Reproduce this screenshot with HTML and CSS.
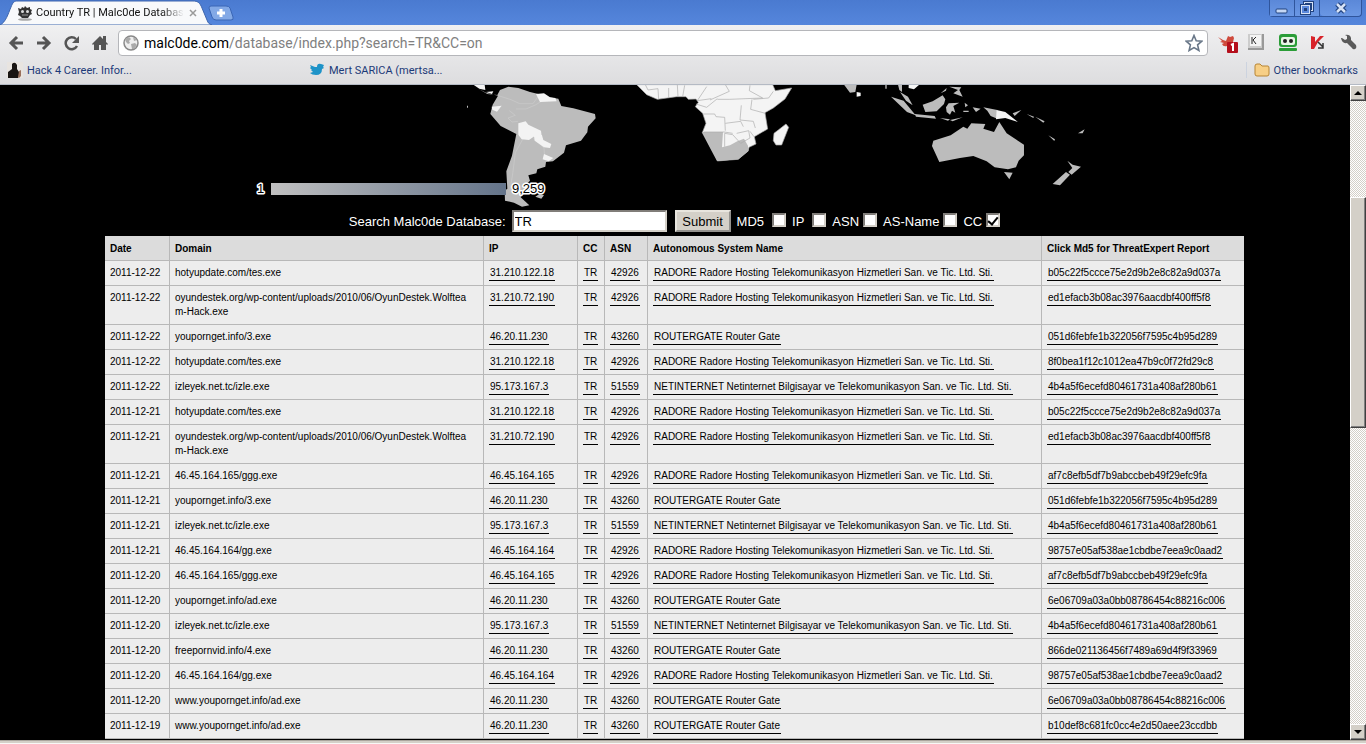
FILE: index.html
```html
<!DOCTYPE html>
<html lang="en">
<head>
<meta charset="utf-8">
<title>Country TR | Malc0de Database</title>
<link rel="stylesheet" href="styles.css">
</head>
<body>
<header class="chrome">
  <div class="tabstrip">
    <div class="tab">
      <svg class="tab-shape" viewBox="0 0 212 25" preserveAspectRatio="none" aria-hidden="true"><path d="M0 25C6 22 8 14 11 7C13 2 14 1 18 1H193C198 1 200 3 202 8L207 20C208 23 209 24 212 25Z" fill="#f8f9fb" stroke="#3d65ad" stroke-width="1"/></svg>
      <svg class="icon16" viewBox="0 0 16 16" aria-hidden="true"><ellipse cx="8" cy="14.5" rx="7" ry="1.3" fill="#aaa"/><path d="M1 3l3 1 1-2 2 1 1-2 2 2 3-1v2l2 1-1 2 1 2-2 1-2 3H5l-2-2-2-1 1-3z" fill="#333"/><circle cx="5.500" cy="6.500" r="1.500" fill="#ddd"/><circle cx="10.500" cy="6.500" r="1.500" fill="#ddd"/><path d="M5 10h6" stroke="#999"/></svg>
      <span class="tab-title">Country TR | Malc0de Databas</span>
      <button class="plain tab-close" aria-label="Close tab"><svg viewBox="0 0 8 8" width="8" height="8"><path d="M1 1l6 6M7 1L1 7" stroke="#9a9a9a" stroke-width="1.5"/></svg></button>
    </div>
    <button class="plain" aria-label="New tab"><svg width="26" height="16" viewBox="0 0 26 16"><path d="M1 3Q1 1 3 1H18Q21 1 22 3L25 12Q26 15 23 15H8Q5 15 4 12Z" fill="#83a9e6" stroke="#3a66b5"/><path d="M13 4v8M9 8h8" stroke="#fff" stroke-width="3"/></svg></button>
    <div class="window-buttons">
      <button aria-label="Minimize"><svg width="14" height="14" viewBox="0 0 14 14"><rect x="1" y="8" width="11" height="4" rx="1" fill="#c5d7f4" stroke="#20427f"/></svg></button>
      <button aria-label="Restore"><svg width="14" height="14" viewBox="0 0 14 14"><rect x="4.500" y="1.500" width="8" height="8" fill="none" stroke="#20427f" stroke-width="3"/><rect x="4.500" y="1.500" width="8" height="8" fill="none" stroke="#d6e2f6"/><rect x="1.500" y="4.500" width="8" height="8" fill="#5b89dc" stroke="#20427f" stroke-width="3"/><rect x="1.500" y="4.500" width="8" height="8" fill="#5b89dc" stroke="#d6e2f6"/><rect x="4" y="7" width="3" height="3" fill="#20427f"/></svg></button>
      <button class="win-close" aria-label="Close"><svg width="14" height="14" viewBox="0 0 14 14"><path d="M3 3l8 8M11 3l-8 8" stroke="#20427f" stroke-width="5"/><path d="M3 3l8 8M11 3l-8 8" stroke="#d6e2f6" stroke-width="2.500"/></svg></button>
    </div>
  </div>
  <div class="toolbar">
    <nav class="nav-buttons">
      <button class="plain" aria-label="Back"><svg class="icon16" viewBox="0 0 16 16"><path d="M9 2L3 8l6 6M3 8h12" fill="none" stroke="#555" stroke-width="3"/></svg></button>
      <button class="plain" aria-label="Forward"><svg class="icon16" viewBox="0 0 16 16"><path d="M7 2l6 6-6 6M13 8H1" fill="none" stroke="#555" stroke-width="3"/></svg></button>
      <button class="plain" aria-label="Reload"><svg class="icon16" viewBox="0 0 16 16"><path d="M13 11A6 6 0 1 1 12 4" fill="none" stroke="#555" stroke-width="2.500"/><path d="M15 1v7H8z" fill="#555"/></svg></button>
      <button class="plain" aria-label="Home"><svg class="icon16" viewBox="0 0 16 16"><path d="M0 9L8 1l3 3V1h3v6l2 2-1 1-1-1v6H9v-5H7v5H2V9l-1 1z" fill="#555"/></svg></button>
    </nav>
    <div class="omnibox">
      <svg class="icon16" viewBox="0 0 16 16" aria-hidden="true"><circle cx="8" cy="8" r="7" fill="#eee" stroke="#888" stroke-width="1.500"/><path d="M2 4l4-2 2 2-2 2 1 2-2 1-2-2zM8 9l4-1 2 2-3 4-2 0zM10 2l4 3-3 1z" fill="#aaa"/></svg>
      <span class="url"><span class="host">malc0de.com</span>/database/index.php?search=TR&amp;CC=on</span>
      <button class="plain" aria-label="Bookmark this page"><svg width="18" height="18" viewBox="0 0 18 18"><path d="M9 1.500l2.200 5.200 5.600.5-4.200 3.700 1.300 5.600L9 13.600l-4.900 2.900 1.300-5.600-4.200-3.700 5.600-.5z" fill="#fff" stroke="#697788" stroke-width="1.600"/></svg></button>
    </div>
    <div class="extensions">
      <button class="plain" aria-label="Notifications"><svg width="22" height="20" viewBox="0 0 22 20"><path d="M0 4l5 3 3 1 2-5 2 1 3-1 1 2-1 4q-2 4-6 4-4 1-5-2l2-1-4-1 2-1z" fill="#cf4a3c"/><rect x="9" y="9" width="11" height="11" rx="1" fill="#b50f1c"/><path d="M13 12l2-1v7" fill="none" stroke="#fff" stroke-width="2"/></svg></button>
      <button class="plain" aria-label="Keyboard"><svg width="20" height="20" viewBox="0 0 20 20"><rect x="0" y="1" width="16" height="16" fill="#999"/><rect x="0" y="1" width="14" height="14" fill="#ccc"/><rect x="2" y="2" width="11" height="11" fill="#f4f4f4"/><path d="M4 4v7M8 4L5 7l3 4" fill="none" stroke="#222"/></svg></button>
      <button class="plain" aria-label="RoboForm"><svg width="20" height="20" viewBox="0 0 20 20"><rect x="1" y="1" width="18" height="13" rx="3" fill="#2b9d38"/><rect x="3" y="4" width="14" height="8" rx="2" fill="#e8f6e6"/><circle cx="7" cy="8" r="2" fill="#222"/><circle cx="13" cy="8" r="2" fill="#222"/><rect x="1" y="15" width="18" height="3" rx="1" fill="#2b9d38"/></svg></button>
      <button class="plain" aria-label="Kaspersky"><svg width="20" height="20" viewBox="0 0 20 20"><path d="M3 3l4 1v5l5-6h4l-6 6-4 7H3z" fill="#d8232a"/><path d="M10 9l5 5m0-4v5h-5" fill="none" stroke="#333" stroke-width="1.500"/></svg></button>
      <button class="plain" aria-label="Settings"><svg width="20" height="20" viewBox="0 0 20 20"><path d="M4 5l3 2 2-1V3L7 2q5-1 6 3v2l5 5q1 3-1 4-2 1-3-1L9 10Q4 11 3 5z" fill="#5a5a5a"/></svg></button>
    </div>
  </div>
  <div class="bookmarks">
    <a class="bookmark first" href="#"><svg class="icon16" viewBox="0 0 16 16" aria-hidden="true"><rect width="16" height="16" fill="#e8e4e0"/><path d="M1 16V10l4-3V2q3-3 5 1v4l2 3v4l-1 2z" fill="#181412"/><path d="M11 15l1-6 2-1v6l-2 2z" fill="#99705c"/></svg>Hack 4 Career. Infor...</a>
    <a class="bookmark" href="#"><svg class="icon16" viewBox="0 0 16 16" aria-hidden="true"><path d="M1 3l5 2 2 0q0-4 4-3l3 1-1 2 1 1-2 1q0 6-6 6-4 0-6-2l3-1-2-2h1L1 6l1-1z" fill="#1e93c8"/></svg>Mert SARICA (mertsa...</a>
    <a class="bookmark other" href="#"><svg class="icon16" viewBox="0 0 16 16" aria-hidden="true"><path d="M1 4q0-2 2-2h3l2 2h6q1 0 1 2v6q0 2-2 2H3q-2 0-2-2z" fill="#f7cf86" stroke="#b78535"/></svg>Other bookmarks</a>
  </div>
</header>
<div class="viewport">
<main class="page">
  <svg class="map" viewBox="255 85 840 122" role="img" aria-label="World map of entries by country">
    <defs><linearGradient id="scale"><stop offset="0" stop-color="#c0c0c0"/><stop offset="1" stop-color="#64748a"/></linearGradient></defs>
    <g transform="translate(450 84) scale(.3333)" stroke-width="2">
      <path d="M58 0L85 14 112 30 142 33 150 18 175 8 205 12 240 24 265 30 285 38 325 44 334 66 370 73 435 90 437 103 414 128 412 145 393 170 348 184 342 206 309 232 288 234 286 248 262 256 259 268 235 274 240 290 226 304 240 312 212 340 238 364 216 368 192 356 165 350 164 320 172 314 169 262 186 215 199 150 152 126 121 90 128 62 144 35 108 26Z" fill="#bcbcbc"/>
      <path d="M145 35l38 12 26 12h40l14-20M178 80l18 14-22 8 12 12 18-2M198 75h30l28-12 20-12M218 166l-22 40-8 64-8 50M248 160l34 32 2 26" fill="none" stroke="#ccc"/>
      <path d="M70 2h34l2 16-18-4zM108 24l22-2-4 8zM125 68l30-3-14 18-14-6zM258 30l24-2 18 12 16 2 4 10-50 2zM205 118l22-6 8 10 38 18 2 16-24 2-14 10-22-2-10-14zM252 156l24-2 4 14 24 12-4 12-18-2-28-20zM282 210l28 12-14 10-18-6z" fill="#f3f3f3"/>
      <path d="M256 338l12-8 14 4-8 10zM51 65h3v6h-3z" fill="#bcbcbc"/>
    </g>
    <g transform="translate(630 84) scale(.3333)" fill="#f4f4f4" stroke="#aaa" stroke-width="2">
      <path d="M20 2H428L436 20 485 12 465 45 430 72 405 86 413 135 373 158 378 180 357 190 355 200 325 226 262 231 217 146 228 118 218 88 196 68 205 55 198 45 175 46 168 38 140 38 82 46 50 32Z"/>
      <path d="M217 144H279L276 190 300 184 322 172 342 164 354 185 355 202 325 226 262 231Z" fill="#bcbcbc" stroke="none"/>
      <path d="M46 2l8 16 30-4 2 32M116 12v28M142 2l2 36M164 4l-6 34M230 8l-28 42 42-6M286 2l12 20-58 26M360 4l-2 16 40 22-100 4-36 0M198 60l32 10 32-26M220 90h34l4 8 26 2 2 40M222 144h60l26 4M286 118l46-6 8 16M308 152l24 26 28-16-4-22-36 8M334 64l-4 44 40 4 6 20M366 46l-4 30 44 12M370 46l46-4 14-20M308 152l-24-4v40M360 142l12 16" fill="none"/>
      <path d="M432 148L445 138 468 120 476 130 455 183 438 183 430 170Z"/>
    </g>
    <g transform="translate(830 84) scale(.3333)" fill="#bcbcbc">
      <path d="M42 2h38l-4 22-16 2zM166 2h4v12h-4zM204 2h12v22l-8-6zM210 24l24 14 14 26-20-14zM183 38l38 12 36 44-26-10zM254 90l60 6 4 8-60-6zM278 62l30-10 30-18 8 12-4 14-22 22-34 2zM332 28l18-16-2 8zM348 70l8-12 32-2-18 10 6 20-10-6-6 12-10-8zM358 8l36 2-6 8 10 20-28-10 14-10zM404 56l10 8-8 6zM428 70l24 4-14 10zM400 80h16v4h-16zM330 102l30 4-6 4zM360 108l38-8-30 12zM460 70l42 8v26l-20-8-10-16zM548 88l26-10-20 18zM590 90l22 8-2 4zM616 98l28 14-4 4zM655 154l20 12-2 5zM744 148l20-12-6 12z"/>
      <path d="M310 170L362 154 400 128 412 134 424 118 466 120 460 134 492 144 508 114 530 148 582 182 582 214 566 230 558 250 534 256 494 250 470 232 430 216 390 222 328 234 306 186ZM522 264l26 2-10 20zM712 230l16 12 25 6-28 24-10-8 12-12zM708 264l12 8-30 32-22-4z"/>
      <path d="M500 78l26 6 38 30-38-12-28 4zM236 2h32l-16 14-16-4zM80 24l12 2v10l-12 2z" fill="#f5f5f5"/>
    </g>
    <rect x="271" y="183" width="235" height="12" fill="url(#scale)"/>
    <g class="map-label"><text x="257" y="193">1</text><text x="512" y="193">9,259</text></g>
  </svg>
  <form class="search" onsubmit="return false">
    <label for="q">Search Malc0de Database:</label>
    <input class="query" id="q" type="text" value="TR">
    <button class="submit" type="submit">Submit</button>
    <label class="option wide">MD5 <input type="checkbox"></label>
    <label class="option wide">IP <input type="checkbox"></label>
    <label class="option">ASN <input type="checkbox"></label>
    <label class="option">AS-Name <input type="checkbox"></label>
    <label class="option">CC <input type="checkbox" checked></label>
  </form>
  <table class="results">
    <colgroup><col class="c-date"><col class="c-domain"><col class="c-ip"><col class="c-cc"><col class="c-asn"><col class="c-name"><col class="c-md5"></colgroup>
    <thead><tr><th>Date</th><th>Domain</th><th>IP</th><th>CC</th><th>ASN</th><th>Autonomous System Name</th><th>Click Md5 for ThreatExpert Report</th></tr></thead>
    <tbody>
    <tr><td>2011-12-22</td><td>hotyupdate.com/tes.exe</td><td><a href="#">31.210.122.18</a></td><td><a href="#">TR</a></td><td><a href="#">42926</a></td><td><a href="#">RADORE Radore Hosting Telekomunikasyon Hizmetleri San. ve Tic. Ltd. Sti.</a></td><td><a href="#">b05c22f5ccce75e2d9b2e8c82a9d037a</a></td></tr>
    <tr><td>2011-12-22</td><td>oyundestek.org/wp-content/uploads/2010/06/OyunDestek.Wolftea<br>m-Hack.exe</td><td><a href="#">31.210.72.190</a></td><td><a href="#">TR</a></td><td><a href="#">42926</a></td><td><a href="#">RADORE Radore Hosting Telekomunikasyon Hizmetleri San. ve Tic. Ltd. Sti.</a></td><td><a href="#">ed1efacb3b08ac3976aacdbf400ff5f8</a></td></tr>
    <tr><td>2011-12-22</td><td>youpornget.info/3.exe</td><td><a href="#">46.20.11.230</a></td><td><a href="#">TR</a></td><td><a href="#">43260</a></td><td><a href="#">ROUTERGATE Router Gate</a></td><td><a href="#">051d6febfe1b322056f7595c4b95d289</a></td></tr>
    <tr><td>2011-12-22</td><td>hotyupdate.com/tes.exe</td><td><a href="#">31.210.122.18</a></td><td><a href="#">TR</a></td><td><a href="#">42926</a></td><td><a href="#">RADORE Radore Hosting Telekomunikasyon Hizmetleri San. ve Tic. Ltd. Sti.</a></td><td><a href="#">8f0bea1f12c1012ea47b9c0f72fd29c8</a></td></tr>
    <tr><td>2011-12-22</td><td>izleyek.net.tc/izle.exe</td><td><a href="#">95.173.167.3</a></td><td><a href="#">TR</a></td><td><a href="#">51559</a></td><td><a href="#">NETINTERNET Netinternet Bilgisayar ve Telekomunikasyon San. ve Tic. Ltd. Sti.</a></td><td><a href="#">4b4a5f6ecefd80461731a408af280b61</a></td></tr>
    <tr><td>2011-12-21</td><td>hotyupdate.com/tes.exe</td><td><a href="#">31.210.122.18</a></td><td><a href="#">TR</a></td><td><a href="#">42926</a></td><td><a href="#">RADORE Radore Hosting Telekomunikasyon Hizmetleri San. ve Tic. Ltd. Sti.</a></td><td><a href="#">b05c22f5ccce75e2d9b2e8c82a9d037a</a></td></tr>
    <tr><td>2011-12-21</td><td>oyundestek.org/wp-content/uploads/2010/06/OyunDestek.Wolftea<br>m-Hack.exe</td><td><a href="#">31.210.72.190</a></td><td><a href="#">TR</a></td><td><a href="#">42926</a></td><td><a href="#">RADORE Radore Hosting Telekomunikasyon Hizmetleri San. ve Tic. Ltd. Sti.</a></td><td><a href="#">ed1efacb3b08ac3976aacdbf400ff5f8</a></td></tr>
    <tr><td>2011-12-21</td><td>46.45.164.165/ggg.exe</td><td><a href="#">46.45.164.165</a></td><td><a href="#">TR</a></td><td><a href="#">42926</a></td><td><a href="#">RADORE Radore Hosting Telekomunikasyon Hizmetleri San. ve Tic. Ltd. Sti.</a></td><td><a href="#">af7c8efb5df7b9abccbeb49f29efc9fa</a></td></tr>
    <tr><td>2011-12-21</td><td>youpornget.info/3.exe</td><td><a href="#">46.20.11.230</a></td><td><a href="#">TR</a></td><td><a href="#">43260</a></td><td><a href="#">ROUTERGATE Router Gate</a></td><td><a href="#">051d6febfe1b322056f7595c4b95d289</a></td></tr>
    <tr><td>2011-12-21</td><td>izleyek.net.tc/izle.exe</td><td><a href="#">95.173.167.3</a></td><td><a href="#">TR</a></td><td><a href="#">51559</a></td><td><a href="#">NETINTERNET Netinternet Bilgisayar ve Telekomunikasyon San. ve Tic. Ltd. Sti.</a></td><td><a href="#">4b4a5f6ecefd80461731a408af280b61</a></td></tr>
    <tr><td>2011-12-21</td><td>46.45.164.164/gg.exe</td><td><a href="#">46.45.164.164</a></td><td><a href="#">TR</a></td><td><a href="#">42926</a></td><td><a href="#">RADORE Radore Hosting Telekomunikasyon Hizmetleri San. ve Tic. Ltd. Sti.</a></td><td><a href="#">98757e05af538ae1cbdbe7eea9c0aad2</a></td></tr>
    <tr><td>2011-12-20</td><td>46.45.164.165/ggg.exe</td><td><a href="#">46.45.164.165</a></td><td><a href="#">TR</a></td><td><a href="#">42926</a></td><td><a href="#">RADORE Radore Hosting Telekomunikasyon Hizmetleri San. ve Tic. Ltd. Sti.</a></td><td><a href="#">af7c8efb5df7b9abccbeb49f29efc9fa</a></td></tr>
    <tr><td>2011-12-20</td><td>youpornget.info/ad.exe</td><td><a href="#">46.20.11.230</a></td><td><a href="#">TR</a></td><td><a href="#">43260</a></td><td><a href="#">ROUTERGATE Router Gate</a></td><td><a href="#">6e06709a03a0bb08786454c88216c006</a></td></tr>
    <tr><td>2011-12-20</td><td>izleyek.net.tc/izle.exe</td><td><a href="#">95.173.167.3</a></td><td><a href="#">TR</a></td><td><a href="#">51559</a></td><td><a href="#">NETINTERNET Netinternet Bilgisayar ve Telekomunikasyon San. ve Tic. Ltd. Sti.</a></td><td><a href="#">4b4a5f6ecefd80461731a408af280b61</a></td></tr>
    <tr><td>2011-12-20</td><td>freepornvid.info/4.exe</td><td><a href="#">46.20.11.230</a></td><td><a href="#">TR</a></td><td><a href="#">43260</a></td><td><a href="#">ROUTERGATE Router Gate</a></td><td><a href="#">866de021136456f7489a69d4f9f33969</a></td></tr>
    <tr><td>2011-12-20</td><td>46.45.164.164/gg.exe</td><td><a href="#">46.45.164.164</a></td><td><a href="#">TR</a></td><td><a href="#">42926</a></td><td><a href="#">RADORE Radore Hosting Telekomunikasyon Hizmetleri San. ve Tic. Ltd. Sti.</a></td><td><a href="#">98757e05af538ae1cbdbe7eea9c0aad2</a></td></tr>
    <tr><td>2011-12-20</td><td>www.youpornget.info/ad.exe</td><td><a href="#">46.20.11.230</a></td><td><a href="#">TR</a></td><td><a href="#">43260</a></td><td><a href="#">ROUTERGATE Router Gate</a></td><td><a href="#">6e06709a03a0bb08786454c88216c006</a></td></tr>
    <tr><td>2011-12-19</td><td>www.youpornget.info/ad.exe</td><td><a href="#">46.20.11.230</a></td><td><a href="#">TR</a></td><td><a href="#">43260</a></td><td><a href="#">ROUTERGATE Router Gate</a></td><td><a href="#">b10def8c681fc0cc4e2d50aee23ccdbb</a></td></tr>
    </tbody>
  </table>
</main>
<div class="scrollbar">
  <button class="raised arrow" aria-label="Scroll up"><svg width="8" height="4" viewBox="0 0 8 4"><path d="M4 0l4 4H0z"/></svg></button>
  <div class="track"><div class="raised thumb"></div></div>
  <button class="raised arrow" aria-label="Scroll down"><svg width="8" height="4" viewBox="0 0 8 4"><path d="M4 4L0 0h8z"/></svg></button>
</div>
</div>
<div class="frame-edge"></div>
</body>
</html>
```
FILE: styles.css
```css
* { box-sizing: border-box; }
body {
  margin: 0;
  height: 100vh;
  display: flex;
  flex-direction: column;
  overflow: hidden;
  background: #000;
  font-family: "Liberation Sans", Arial, sans-serif;
}
button { font-family: inherit; }
svg { display: block; }
.plain { border: 0; padding: 0; background: none; }
.icon16 { width: 16px; height: 16px; flex: none; }

.chrome {
  flex: none;
  font-family: Roboto, Tahoma, sans-serif;
  background: linear-gradient(#f8f8f9, #dddddf);
  border-bottom: 1px solid #b4bac4;
}
.tabstrip {
  display: flex;
  align-items: center;
  height: 25px;
  background: linear-gradient(#4a7ad0, #5586dc);
}
.tab {
  position: relative;
  display: flex;
  align-items: center;
  width: 208px;
  height: 25px;
  padding: 0 13px 0 17px;
}
.tab-shape { position: absolute; left: 0; top: 0; width: 212px; height: 25px; }
.tab .icon16, .tab-title, .tab-close { position: relative; }
.tab-title {
  flex: 1;
  margin: 0 5px 0 3px;
  white-space: nowrap;
  font-size: 11px;
  color: #111;
  -webkit-mask-image: linear-gradient(90deg, #000 85%, transparent);
  mask-image: linear-gradient(90deg, #000 85%, transparent);
}
.window-buttons {
  display: flex;
  align-self: flex-start;
  margin: 0 4px 0 auto;
  border: 1px solid #2f559c;
  border-top: 0;
  border-radius: 0 0 4px 4px;
}
.window-buttons button {
  display: flex;
  align-items: center;
  justify-content: center;
  width: 25px;
  height: 16px;
  padding: 0;
  border: 0;
  border-right: 1px solid #2f559c;
  background: linear-gradient(#5b88d8, #6a97e4);
}
.window-buttons .win-close { width: 41px; border-right: 0; border-radius: 0 0 4px 4px; }

.toolbar { display: flex; align-items: center; height: 35px; padding: 0 8px; gap: 10px; }
.nav-buttons { display: flex; gap: 12px; }
.omnibox {
  flex: 1;
  display: flex;
  align-items: center;
  gap: 5px;
  height: 26px;
  padding: 0 4px;
  border: 1px solid #b5b6ba;
  border-radius: 4px;
  background: #fff;
}
.url { flex: 1; font-size: 14px; color: #808080; }
.host { color: #000; }
.extensions { display: flex; gap: 10px; }
.extensions button { width: 20px; height: 20px; }
.extensions svg { overflow: visible; }

.bookmarks { display: flex; height: 24px; padding: 2px 8px 6px 7px; }
.bookmark {
  display: flex;
  align-items: center;
  gap: 4px;
  white-space: nowrap;
  font-size: 11px;
  color: #1c3a78;
  text-decoration: none;
}
.first { width: 302px; }
.other { margin-left: auto; padding-left: 7px; border-left: 1px solid #ccd3df; }

.viewport { flex: 1; min-height: 0; display: flex; }
.page { flex: 1; min-width: 0; padding-right: 1px; overflow: hidden; color: #fff; }
.map { width: 840px; max-width: 100%; margin: 0 auto; }
.map-label text {
  font-family: "Liberation Sans", Arial, sans-serif;
  font-size: 13px;
  fill: #000;
  stroke: #fff;
  stroke-width: 3px;
  stroke-linejoin: round;
  paint-order: stroke;
}
.search {
  display: flex;
  justify-content: center;
  align-items: center;
  padding: 3px 0 4px;
  font-size: 13px;
}
.query {
  width: 155px;
  height: 22px;
  margin: 0 8px 0 6px;
  padding: 1px;
  border: 2px inset #d4d0c8;
  background: #fff;
  color: #000;
  font-family: inherit;
  font-size: 13px;
}
.submit {
  width: 56px;
  height: 22px;
  padding: 0;
  border: 2px outset #e8e5de;
  background: #d4d0c8;
  color: #000;
  font-size: 13px;
}
.option { display: flex; align-items: center; gap: 4px; margin-left: 6px; }
.option.wide { gap: 8px; }
.option input {
  appearance: none;
  display: grid;
  place-items: center;
  width: 14px;
  height: 14px;
  margin: 0 0 2px;
  border: 2px inset #d4d0c8;
  background: #fff;
}
.option input:checked::before {
  content: "";
  width: 4px;
  height: 8px;
  border: solid #000;
  border-width: 0 2px 2px 0;
  transform: rotate(40deg);
}

.results {
  width: 1139px;
  max-width: 100%;
  margin: 0 auto;
  table-layout: fixed;
  border-spacing: 0;
  background: #ededed;
  color: #000;
  font-size: 10px;
  line-height: 14px;
}
.c-date { width: 65px; }
.c-domain { width: 314px; }
.c-ip { width: 94px; }
.c-cc { width: 27px; }
.c-asn { width: 43px; }
.c-name { width: 394px; }
.results th, .results td {
  padding: 5px;
  border-right: 1px solid #b8b8b8;
  border-bottom: 1px solid #b8b8b8;
  text-align: left;
  vertical-align: top;
  white-space: nowrap;
}
.results th { padding: 6px 5px 4px; background: #dcdcdc; }
.results th:last-child, .results td:last-child { border-right: 0; }
.results a {
  padding: 0 1px 2px;
  border-bottom: 1px solid #000;
  color: #000;
  text-decoration: none;
}

.scrollbar {
  flex: none;
  width: 16px;
  display: flex;
  flex-direction: column;
  background: repeating-conic-gradient(#d4d0c8 0 25%, #fff 0 50%) 0 0 / 2px 2px;
}
.raised {
  background: #d4d0c8;
  border: 1px solid;
  border-color: #fff #404040 #404040 #fff;
  box-shadow: inset -1px -1px #808080;
}
.arrow { display: flex; align-items: center; justify-content: center; height: 16px; padding: 0; }
.track { flex: 1; display: flow-root; }
.thumb { margin-top: 96px; height: 231px; }
.frame-edge { flex: none; height: 4px; background: #d4d0c8; border-top: 1px solid #aaa69e; border-bottom: 1px solid #f8f8f6; }
```
